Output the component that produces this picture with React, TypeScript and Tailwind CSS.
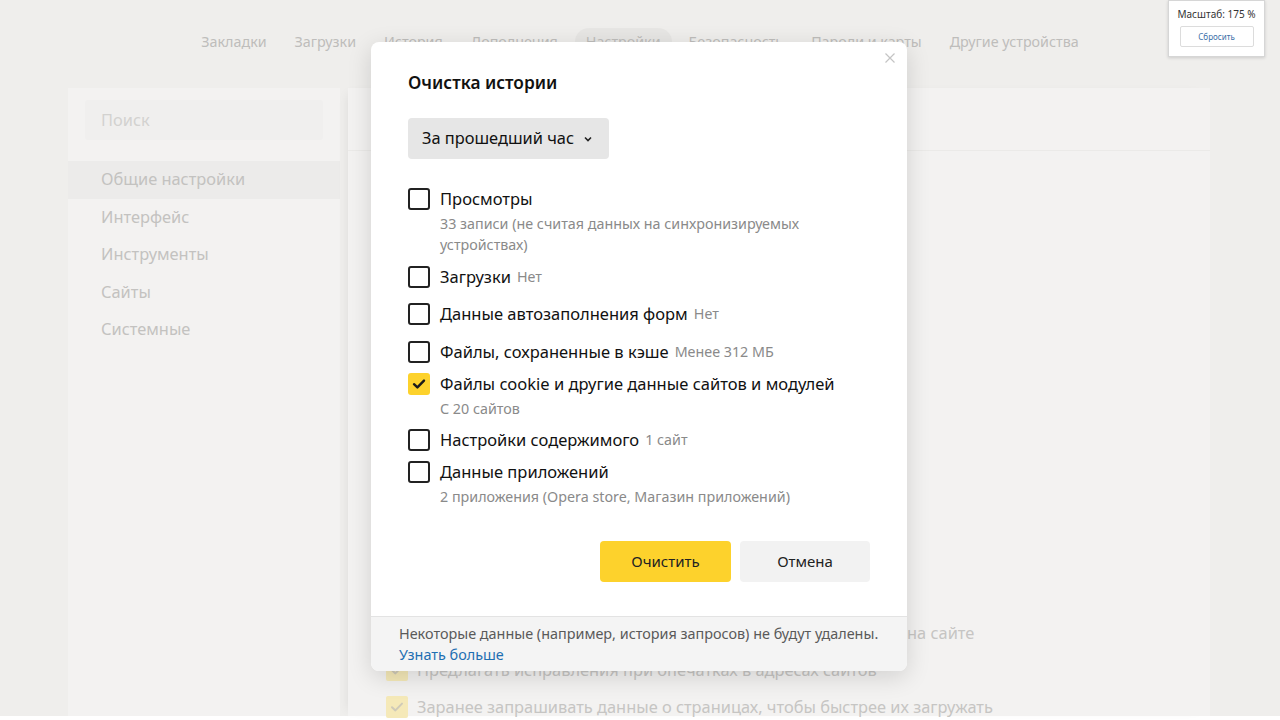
import React from "react";

const font = { fontFamily: '"Noto Sans", "Open Sans", sans-serif' };

function Check({ checked }: { checked?: boolean }) {
  if (checked) {
    return (
      <div className="w-[22px] h-[22px] shrink-0 rounded-[3px] bg-[#fdd22c] flex items-center justify-center">
        <svg width="14" height="14" viewBox="0 0 14 14" fill="none">
          <path d="M2 7.2 L5.4 10.4 L12 3.6" stroke="#1a1a1a" strokeWidth="2.4" strokeLinecap="round" strokeLinejoin="round" />
        </svg>
      </div>
    );
  }
  return <div className="w-[22px] h-[22px] shrink-0 rounded-[3px] border-2 border-[#222]" />;
}

type Row = { label: string; extra?: string; sub?: string[]; checked?: boolean; mt: string };

const rows: Row[] = [
  { label: "Просмотры", sub: ["33 записи (не считая данных на синхронизируемых", "устройствах)"], mt: "mt-[29px]" },
  { label: "Загрузки", extra: "Нет", mt: "mt-[11px]" },
  { label: "Данные автозаполнения форм", extra: "Нет", mt: "mt-[15px]" },
  { label: "Файлы, сохраненные в кэше", extra: "Менее 312 МБ", mt: "mt-[16px]" },
  { label: "Файлы cookie и другие данные сайтов и модулей", sub: ["С 20 сайтов"], checked: true, mt: "mt-[10px]" },
  { label: "Настройки содержимого", extra: "1 сайт", mt: "mt-[10px]" },
  { label: "Данные приложений", sub: ["2 приложения (Opera store, Магазин приложений)"], mt: "mt-[10px]" },
];

const navItems = ["Закладки", "Загрузки", "История", "Дополнения", "Настройки", "Безопасность", "Пароли и карты", "Другие устройства"];
const sideItems = ["Общие настройки", "Интерфейс", "Инструменты", "Сайты", "Системные"];

function FadedCheck() {
  return (
    <div className="w-[22px] h-[22px] shrink-0 bg-[#f5e9b8] rounded-[2px] flex items-center justify-center">
      <svg width="14" height="14" viewBox="0 0 14 14" fill="none">
        <path d="M2 7.2 L5.4 10.4 L12 3.6" stroke="#cfcab8" strokeWidth="2" strokeLinecap="round" strokeLinejoin="round" />
      </svg>
    </div>
  );
}

export default function App() {
  return (
    <div className="relative w-[1280px] h-[720px] bg-white overflow-hidden" style={font}>
      {/* background page */}
      <div className="h-[716px] bg-[#efeeec] flex flex-col">
        <nav className="h-[88px] flex justify-center items-start pt-[28px] gap-[28px] text-[14.3px] text-[#bebdbb]">
          {navItems.map((n) => (
            <span
              key={n}
              className={
                n === "Настройки"
                  ? "h-[28px] px-[11px] -mx-[11px] rounded-full bg-[#e7e6e4] flex items-center"
                  : "h-[28px] flex items-center"
              }
            >
              {n}
            </span>
          ))}
        </nav>
        <div className="flex-1 flex pl-[68px] gap-[8px]">
          <aside className="w-[272px] bg-[#f3f2f1] flex flex-col pt-[12px]">
            <div className="mx-[17px] h-[40px] bg-[#f0efee] rounded-[3px] flex items-center px-[16px] text-[16.4px] text-[#d3d2d0]">
              Поиск
            </div>
            <div className="mt-[21px] flex flex-col">
              {sideItems.map((s, i) => (
                <div
                  key={s}
                  className={
                    "h-[37.5px] flex items-center pl-[33px] text-[16.4px] text-[#c3c2c0] " +
                    (i === 0 ? "bg-[#ecebea]" : "")
                  }
                >
                  {s}
                </div>
              ))}
            </div>
          </aside>
          <main className="w-[862px] bg-[#f3f2f1] shadow-[-6px_0_10px_-6px_rgba(0,0,0,0.08)] flex flex-col">
            <div className="h-[63px] border-b border-[#ebeae8]" />
            <div className="flex-1 flex flex-col justify-end pl-[38px] text-[16.4px] text-[#c6c5c3]">
              <div className="flex items-center h-[24px] pl-[521px]">на сайте</div>
              <div className="flex items-center gap-[9px] mt-[13px] h-[24px]">
                <FadedCheck />
                <span>Предлагать исправления при опечатках в адресах сайтов</span>
              </div>
              <div className="flex items-center gap-[9px] mt-[13px] h-[24px] mb-[-3px]">
                <FadedCheck />
                <span>Заранее запрашивать данные о страницах, чтобы быстрее их загружать</span>
              </div>
            </div>
          </main>
        </div>
      </div>

      {/* zoom popup */}
      <div className="absolute left-[1168px] top-0 w-[97px] h-[57px] bg-white border border-[#d6d6d6] shadow-[0_1px_3px_rgba(0,0,0,0.15)] flex flex-col items-center pt-[6px]">
        <div className="text-[10px] text-[#333] leading-[14px]">Масштаб: 175 %</div>
        <div className="mt-[5px] w-[74px] h-[21px] border border-[#dcdcdc] rounded-[2px] flex items-center justify-center text-[8px] text-[#3b6fa8]">
          Сбросить
        </div>
      </div>

      {/* dialog */}
      <div className="absolute left-[371px] top-[42px] w-[536px] h-[629px] bg-white rounded-[8px] shadow-[0_6px_24px_rgba(0,0,0,0.14)] flex flex-col overflow-hidden">
        <div className="flex-1 relative flex flex-col px-[37px] pt-[28px]">
          <div className="absolute right-[11px] top-[10px]">
            <svg width="12" height="12" viewBox="0 0 12 12" fill="none">
              <path d="M1.5 1.5 L10.5 10.5 M10.5 1.5 L1.5 10.5" stroke="#c4c4c4" strokeWidth="1.2" />
            </svg>
          </div>
          <h1 className="text-[17.3px] font-semibold text-[#111] leading-[26px]">Очистка истории</h1>
          <div className="mt-[22px] w-[201px] h-[41px] bg-[#e6e6e6] rounded-[4px] flex items-center pl-[14px] text-[16.4px] text-[#111]">
            <span>За прошедший час</span>
            <svg className="ml-[9px]" width="10" height="10" viewBox="0 0 10 10" fill="none">
              <path d="M2 3.5 L5 6.5 L8 3.5" stroke="#222" strokeWidth="1.6" />
            </svg>
          </div>
          {rows.map((r) => (
            <div key={r.label} className={"flex gap-[10px] " + r.mt}>
              <Check checked={r.checked} />
              <div className="flex flex-col">
                <div className="h-[22px] flex items-center gap-[6px] text-[16.5px] text-[#111] whitespace-nowrap">
                  <span>{r.label}</span>
                  {r.extra && <span className="text-[14.3px] text-[#8a8a8a]">{r.extra}</span>}
                </div>
                {r.sub && (
                  <div className="mt-[3px] text-[14.3px] leading-[21px] text-[#8a8a8a]">
                    {r.sub.map((s) => (
                      <div key={s}>{s}</div>
                    ))}
                  </div>
                )}
              </div>
            </div>
          ))}
          <div className="mt-[34px] flex justify-end gap-[9px]">
            <button className="w-[131px] h-[41px] rounded-[4px] bg-[#fdd22c] text-[15px] text-[#222]">Очистить</button>
            <button className="w-[130px] h-[41px] rounded-[4px] bg-[#f2f2f2] text-[15px] text-[#222]">Отмена</button>
          </div>
        </div>
        <div className="h-[55px] bg-[#f4f4f4] border-t border-[#e3e3e3] px-[28px] pt-[6px] text-[14.4px] leading-[21px]">
          <div className="text-[#5a5a5a]">Некоторые данные (например, история запросов) не будут удалены.</div>
          <div className="text-[#1f6fb2]">Узнать больше</div>
        </div>
      </div>
    </div>
  );
}
